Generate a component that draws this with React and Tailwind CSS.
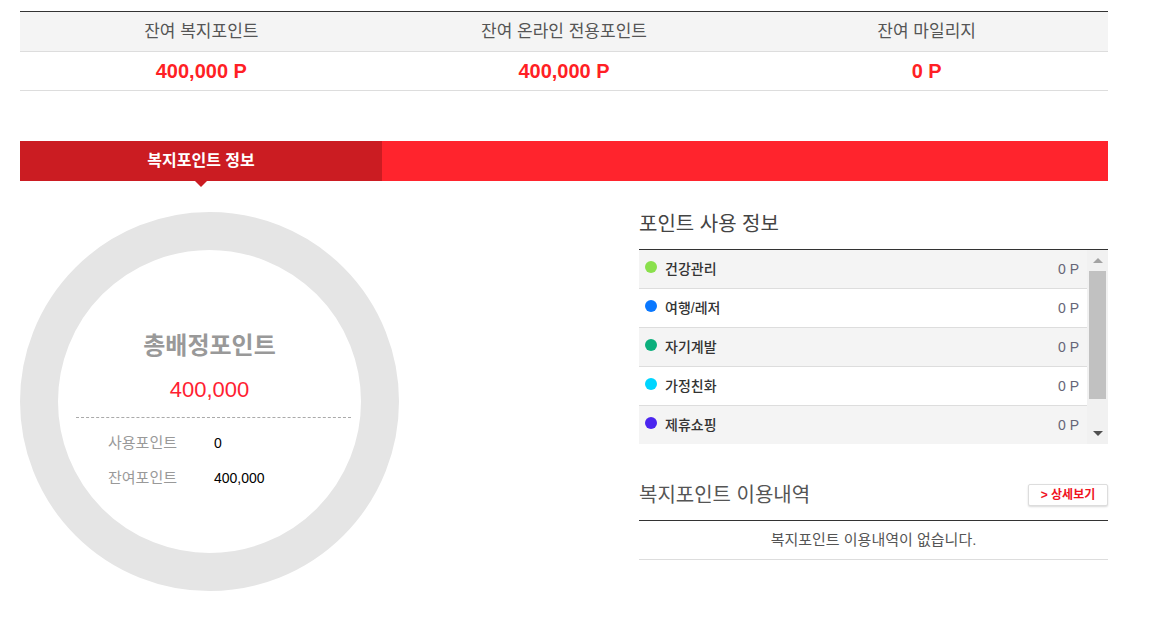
import React from 'react';

const FONT = { fontFamily: '"Liberation Sans", "Noto Sans CJK KR", sans-serif' };

const balances = [
  { label: '잔여 복지포인트', value: '400,000 P' },
  { label: '잔여 온라인 전용포인트', value: '400,000 P' },
  { label: '잔여 마일리지', value: '0 P' },
];

const categories = [
  { name: '건강관리', color: 'bg-[#8ae04c]', value: '0 P' },
  { name: '여행/레저', color: 'bg-[#0a78ff]', value: '0 P' },
  { name: '자기계발', color: 'bg-[#0caf7c]', value: '0 P' },
  { name: '가정친화', color: 'bg-[#00d5ff]', value: '0 P' },
  { name: '제휴쇼핑', color: 'bg-[#4b25ef]', value: '0 P' },
];

const App = () => {
  return (
    <div className="min-h-screen bg-white" style={FONT}>
      <div className="w-[1088px] ml-[20px] pt-[11px]">
        {/* Balance summary */}
        <div className="border-t border-[#333]">
          <div className="grid grid-cols-3 h-[40px] bg-[#f4f4f4] border-b border-[#ddd]">
            {balances.map((b) => (
              <div key={b.label} className="flex items-center justify-center text-[17px] text-[#555]">
                {b.label}
              </div>
            ))}
          </div>
          <div className="grid grid-cols-3 h-[39px] border-b border-[#ddd]">
            {balances.map((b) => (
              <div key={b.label} className="flex items-center justify-center text-[20px] font-bold text-[#ff1f25]">
                {b.value}
              </div>
            ))}
          </div>
        </div>

        {/* Tab bar */}
        <div className="mt-[50px] flex h-[40px] bg-[#ff242d]">
          <div className="relative w-[362px] bg-[#cb1c22] flex items-center justify-center text-white text-[16px] font-bold">
            복지포인트 정보
            <span className="absolute left-1/2 -translate-x-1/2 top-full w-0 h-0 border-l-[6px] border-r-[6px] border-t-[6px] border-l-transparent border-r-transparent border-t-[#cb1c22]"></span>
          </div>
        </div>

        <div className="flex justify-between">
          {/* Donut */}
          <div className="mt-[31px] w-[379px] h-[379px] rounded-full border-[38px] border-[#e5e5e5] flex flex-col items-center pt-[80px]">
            <div className="text-[24px] leading-[32px] font-bold text-[#999]">총배정포인트</div>
            <div className="mt-[13px] text-[22px] leading-[30px] font-medium text-[#ff1e32]">400,000</div>
            <div className="mt-[12px] self-start ml-[18px] w-[275px] border-t border-dashed border-[#aaa]"></div>
            <div className="mt-[14px] w-full pl-[50px] flex items-center h-[22px] text-[15px]">
              <span className="w-[106px] text-[#999]">사용포인트</span>
              <span className="text-[14px] font-medium text-black">0</span>
            </div>
            <div className="mt-[13px] w-full pl-[50px] flex items-center h-[22px] text-[15px]">
              <span className="w-[106px] text-[#999]">잔여포인트</span>
              <span className="text-[14px] font-medium text-black">400,000</span>
            </div>
          </div>

          {/* Right column */}
          <div className="w-[469px]">
            <div className="h-[68px] pt-[29px] text-[20px] leading-[28px] text-[#444]">포인트 사용 정보</div>
            <div className="border-t border-[#333] flex h-[195px] overflow-hidden">
              <div className="flex-1">
                {categories.map((c, i) => (
                  <div
                    key={c.name}
                    className={`h-[39px] border-b border-[#ddd] flex items-center justify-between pl-[6px] pr-[8px] ${i % 2 === 0 ? 'bg-[#f4f4f4]' : 'bg-white'}`}
                  >
                    <div className="flex items-center">
                      <span className={`w-[12px] h-[12px] rounded-full ${c.color} -mt-[4px]`}></span>
                      <span className="ml-[8px] text-[14px] font-medium text-[#333]">{c.name}</span>
                    </div>
                    <span className="text-[14px] text-[#667]">{c.value}</span>
                  </div>
                ))}
              </div>
              {/* Scrollbar */}
              <div className="w-[21px] bg-[#f1f1f1] flex flex-col items-center">
                <div className="h-[21px] flex items-center justify-center">
                  <span className="w-0 h-0 border-l-[5px] border-r-[5px] border-b-[5px] border-l-transparent border-r-transparent border-b-[#a3a3a3]"></span>
                </div>
                <div className="w-[17px] h-[128px] bg-[#c1c1c1]"></div>
                <div className="flex-1 flex items-end justify-center pb-[8px]">
                  <span className="w-0 h-0 border-l-[5px] border-r-[5px] border-t-[5px] border-l-transparent border-r-transparent border-t-[#505050]"></span>
                </div>
              </div>
            </div>

            <div className="h-[76px] flex items-end pb-[11px]">
              <div className="w-full h-[28px] flex items-center justify-between">
                <span className="text-[20px] text-[#555]">복지포인트 이용내역</span>
                <button className="w-[80px] h-[22px] bg-white border border-[#ddd] rounded-[2px] shadow-[0_1px_2px_rgba(0,0,0,0.15)] text-[12px] font-bold text-[#f0141e] flex items-center justify-center">
                  &gt; 상세보기
                </button>
              </div>
            </div>
            <div className="border-t border-[#333] h-[40px] border-b border-b-[#ddd] flex items-center justify-center text-[15px] text-[#555]">
              복지포인트 이용내역이 없습니다.
            </div>
          </div>
        </div>
      </div>
    </div>
  );
};

export default App;
